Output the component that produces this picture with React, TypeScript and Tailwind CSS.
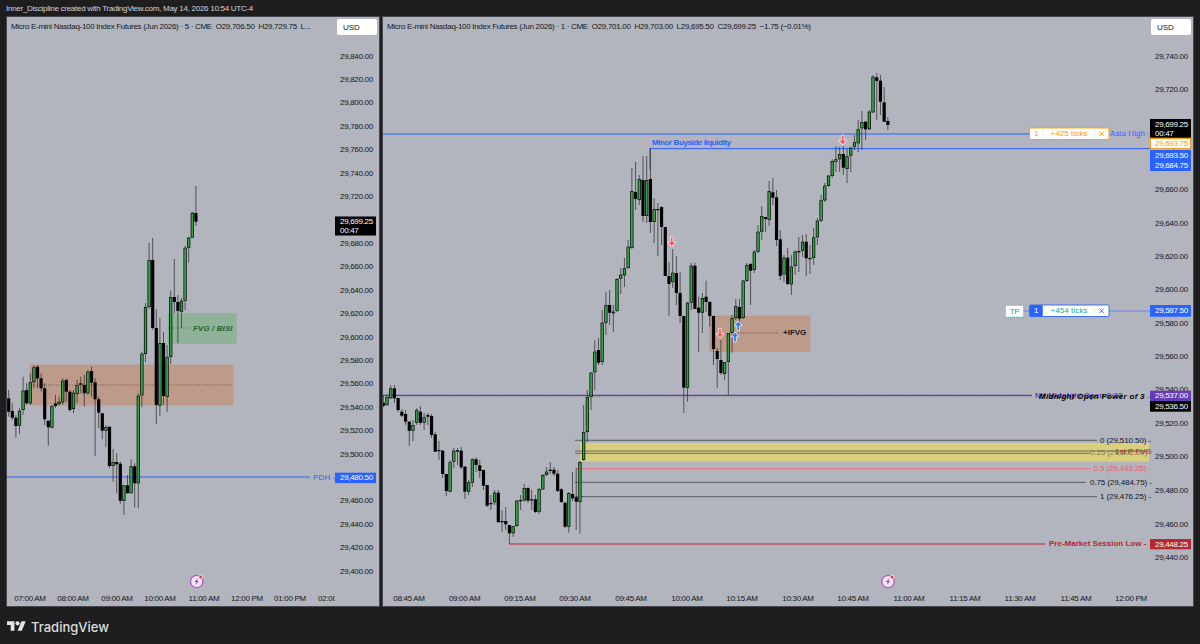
type Candle = [number, number, number, number, number];

// [body top, body bottom, wick top, wick bottom, green?] in page pixels
const leftCandles: Candle[] = [
  [398.3, 411.7, 390, 416.7, 0], [411, 417.7, 403.3, 420, 0], [417.7, 426, 415, 437.7, 0], [410.7, 425.7, 408.3, 434, 1],
  [390.7, 410, 376.7, 415, 1], [390, 403.3, 383.3, 405, 0], [382.3, 403.3, 373.3, 405, 1], [367.3, 382.3, 365, 388.3, 1],
  [366.7, 378.3, 365, 388.3, 0], [378.3, 388.3, 373.3, 391.7, 0], [388.3, 419.3, 383.3, 425, 0], [420.7, 427.3, 420.7, 445.7, 0],
  [406, 427.7, 405, 428.3, 1], [403.3, 406, 395, 408.3, 0], [401.7, 404, 396.7, 406, 1], [380.7, 402.3, 378.3, 405, 1],
  [380, 391.7, 378.3, 401.7, 0], [391.7, 410, 390, 411.7, 0], [392.7, 409, 390, 413.3, 1], [385, 394, 380, 403.3, 1],
  [383.3, 385, 376.7, 393.3, 1], [385, 393.3, 375, 406.7, 0], [371.7, 393.3, 370, 395, 1], [371, 382.7, 366.7, 396.7, 0],
  [382.3, 399.3, 378.3, 456, 0], [399.3, 412.7, 396.7, 428.3, 0], [413.3, 430.7, 413.3, 439.3, 0], [427, 430.7, 425, 446.7, 1],
  [426.7, 466, 426.7, 468.3, 0], [462, 466, 449, 481.7, 1], [462, 464.3, 453.3, 493.3, 0], [463.7, 500.7, 461.7, 504, 0],
  [485.3, 501, 485, 515, 1], [485.3, 493.3, 475, 493.3, 0], [466.3, 493.3, 459.3, 493.3, 1], [466.3, 483.3, 463.3, 507.3, 0],
  [395.7, 483.3, 393.3, 508.3, 1], [353.7, 395.3, 351.7, 407.3, 1], [307, 354, 303, 362, 1], [260, 307, 243, 309, 1],
  [260, 328, 238, 330, 0], [328, 405, 309, 424, 0], [343, 405.6, 318, 416, 1], [343, 396, 332, 405, 0],
  [357, 397, 345, 412, 1], [297, 357, 290.7, 364, 1], [297, 302, 259, 313, 0], [302, 311, 295, 343, 0],
  [300.7, 311.7, 298, 328, 1], [247.7, 300.7, 246, 310, 1], [237.7, 247.7, 237, 262.7, 1], [212.7, 237.7, 212, 238, 1],
  [213, 221.7, 186, 226, 0],
];

const rightCandles: Candle[] = [
  [402.7, 406, 395, 407, 0], [397, 405, 394, 406, 1], [388.3, 398.3, 385, 399, 1], [388.3, 398.3, 385, 403, 0],
  [398, 410, 398, 412, 0], [411.7, 415.7, 409, 417, 0], [414, 421.7, 410, 425, 0], [421.7, 430.7, 421, 446, 0],
  [425, 430.7, 420, 441, 1], [410, 422.7, 408, 425, 1], [411.7, 422.7, 406, 425, 0], [417.3, 422.7, 413, 430, 1],
  [415, 416.7, 413, 425, 0], [416, 435, 414, 438, 0], [434.3, 451.7, 432, 452, 0], [450, 451, 441, 460, 0],
  [450.7, 474, 450, 478, 0], [474, 491, 474, 496, 0], [462.3, 491.7, 460, 492, 1], [450.7, 461.7, 448, 468, 1],
  [450, 451.7, 448, 465, 1], [450.7, 467.3, 447, 469, 0], [466.7, 491.7, 466, 499, 0], [482.3, 491.7, 480, 495, 1],
  [459.3, 482.7, 458, 487, 1], [459.3, 465, 457, 472, 0], [465.3, 471, 460, 478, 0], [470, 485.7, 470, 490, 0],
  [485, 505.7, 485, 507, 0], [503, 504, 495, 510, 0], [492.7, 502.3, 490, 505, 1], [492.7, 522.3, 490, 522, 0],
  [521, 522, 510, 532, 0], [521, 524.3, 507, 530, 0], [525, 533.3, 525, 544, 0], [526, 533.3, 526, 537, 1],
  [500.7, 526, 500, 527, 1], [500, 501, 495, 510, 0], [488, 500.3, 484, 502, 1], [488, 500.7, 487, 503, 0],
  [499.3, 500, 490, 510, 0], [499.3, 512, 495, 513, 0], [489, 511.7, 488, 514, 1], [475, 489.3, 474, 490, 1],
  [471.7, 475, 467, 476, 1], [469.7, 471, 462, 474, 0], [469.7, 473.7, 467, 476, 0], [473.7, 491, 470, 492, 0],
  [489.3, 502, 488, 503, 0], [502.7, 526.7, 502, 528, 0], [493, 526.7, 492, 532.7, 1], [494, 498.3, 472, 501, 0],
  [497.3, 501.7, 468, 530, 0], [462, 502, 461, 533.7, 1], [432, 460, 405, 461, 1], [397, 432, 390, 442, 1],
  [372.7, 397, 372, 410, 1], [351.7, 372.3, 340, 390, 1], [350, 362.7, 338, 365, 0], [322.7, 362, 310, 365, 1],
  [305, 322.7, 292, 335, 1], [305, 312.7, 290, 325, 0], [311.7, 313.3, 305, 332, 1], [279, 311, 278, 312, 1],
  [274.7, 278.7, 268, 294, 1], [268.3, 275.3, 258, 287, 1], [246.7, 268, 240, 269, 1], [191, 248, 168, 249, 1],
  [192, 199, 162, 210, 0], [179, 200, 175, 205, 1], [180, 216, 156, 222, 0], [180, 216, 156, 223, 1],
  [179, 222, 148, 233, 0], [209, 222, 198, 243, 1], [209, 210, 203, 256, 0], [207, 227, 206, 245, 0],
  [227, 276, 227, 276, 0], [276, 284, 262, 316, 0], [272.7, 282, 249, 288, 1], [273, 293, 256, 305, 0],
  [293, 316, 272, 323, 0], [316, 387.7, 316, 413, 0], [302.7, 387.7, 302, 401.7, 1], [265.7, 302.7, 263, 310, 1],
  [265.7, 309, 262.7, 309, 0], [307.7, 312.7, 296.7, 351.7, 0], [298, 312.7, 293, 333, 1], [296.7, 302, 280.7, 311.7, 0],
  [302, 316, 301, 326.7, 0], [316, 349, 316, 365, 0], [351, 359, 348, 388, 0], [360, 373, 340, 375, 0],
  [362, 374, 362, 380, 1], [333, 362, 333, 395, 1], [318, 333, 315, 352.7, 1], [306, 318, 299, 320, 1],
  [307, 318.7, 299, 323, 0], [280.7, 318, 280, 319, 1], [265, 281, 263, 281.7, 1], [264, 270.7, 263, 305, 0],
  [251.7, 270, 250, 273, 1], [231.7, 251.7, 225, 253, 1], [216, 231.7, 206, 240, 1], [217, 219, 217, 232, 0],
  [191, 220, 181, 226, 1], [192.3, 197.7, 178, 205, 0], [197.3, 240, 190, 246, 0], [239.3, 276, 230, 280, 0],
  [257.7, 274.3, 255, 282, 1], [257.7, 284, 248, 285, 0], [266.7, 284.3, 255, 295, 1], [251.7, 266, 250, 275, 1],
  [251, 252.3, 237, 272, 0], [241.7, 250.7, 235, 257, 1], [241.7, 258.3, 234, 276, 0], [258, 259, 245, 274, 0],
  [237.3, 258, 228, 265, 1], [220.7, 237.3, 218, 245, 1], [200.3, 220.7, 195, 222, 1], [185.7, 200.3, 183, 202, 1],
  [175.7, 186, 175, 187, 1], [161, 176, 159, 178, 1], [159.3, 161.7, 146, 172, 1], [154, 159.3, 147, 172, 1],
  [154, 167.7, 146, 175, 0], [156.3, 169, 148, 183, 1], [147.7, 155.7, 147, 172, 1], [142.3, 146.7, 135, 150, 1],
  [129.3, 143.3, 120, 152, 1], [122, 128.3, 111, 150, 1], [121.7, 129.3, 121, 140, 0], [111.7, 129.3, 110, 130, 1],
  [76.7, 112.3, 75, 113, 1], [77.3, 81, 73, 120, 0], [80.7, 101.7, 75, 115, 0], [102.3, 121.7, 87, 122, 0],
  [121, 125, 117, 130, 0],
];

const leftPrices = ["29,840.00", "29,820.00", "29,800.00", "29,780.00", "29,760.00", "29,740.00", "29,720.00", "29,700.00", "29,680.00", "29,660.00", "29,640.00", "29,620.00", "29,600.00", "29,580.00", "29,560.00", "29,540.00", "29,520.00", "29,500.00", "", "29,460.00", "29,440.00", "29,420.00", "29,400.00"];

const rightPrices: [string, number][] = [
  ["29,740.00", 56], ["29,720.00", 89], ["29,660.00", 189], ["29,640.00", 223], ["29,620.00", 256], ["29,600.00", 289],
  ["29,580.00", 323], ["29,560.00", 356], ["29,540.00", 389], ["29,520.00", 423], ["29,500.00", 456], ["29,480.00", 490],
  ["29,460.00", 524], ["29,440.00", 557],
];

const leftTimes: [string, number][] = [["07:00 AM", 30], ["08:00 AM", 73], ["09:00 AM", 117], ["10:00 AM", 160], ["11:00 AM", 204], ["12:00 PM", 247], ["01:00 PM", 290], ["02:00 PM", 334]];

const rightTimes: [string, number][] = [
  ["08:45 AM", 409], ["09:00 AM", 464.6], ["09:15 AM", 520], ["09:30 AM", 575], ["09:45 AM", 631], ["10:00 AM", 687], ["10:15 AM", 742],
  ["10:30 AM", 798], ["10:45 AM", 853], ["11:00 AM", 909], ["11:15 AM", 965], ["11:30 AM", 1020], ["11:45 AM", 1076], ["12:00 PM", 1131],
];

function Candles({ data, x0, step }: { data: Candle[]; x0: number; step: number }) {
  return (
    <g>
      {data.map(([top, bot, wt, wb, up], i) => {
        const x = x0 + step * i;
        return (
          <g key={i}>
            <line x1={x} x2={x} y1={wt} y2={wb} stroke="#2a2a2a" strokeWidth="1" opacity="0.7" />
            <rect x={x - 1.6} y={top} width="3.2" height={Math.max(bot - top, 1.2)} fill="#000000" />
            {up === 1 && bot - top > 1.5 && <rect x={x - 0.9} y={top + 0.6} width="1.8" height={bot - top - 1.2} fill="#2fa644" />}
          </g>
        );
      })}
    </g>
  );
}

function Label({ x, y, children, fill = "#131722", anchor = "start", className = "tracking-[-0.3px]" }: { x: number; y: number; children: string; fill?: string; anchor?: "start" | "middle" | "end"; className?: string }) {
  return (
    <text x={x} y={y} fill={fill} textAnchor={anchor} dominantBaseline="central" className={"text-[8px] " + className}>
      {children}
    </text>
  );
}

function Tag({ x, y, w = 41, h = 10.4, bg, text, fill = "#ffffff" }: { x: number; y: number; w?: number; h?: number; bg: string; text: string; fill?: string }) {
  return (
    <g>
      <rect x={x} y={y} width={w} height={h} fill={bg} />
      <Label x={x + 5} y={y + h / 2} fill={fill}>{text}</Label>
    </g>
  );
}

function Bolt({ cx, cy }: { cx: number; cy: number }) {
  return (
    <g transform={`translate(${cx} ${cy})`}>
      <circle r="6.2" fill="#f3e5f5" stroke="#b455c9" strokeWidth="1.3" />
      <path d="M1.6 -3.4 L-2 0.6 L-0.2 0.6 L-1.6 3.4 L2 -0.6 L0.2 -0.6 Z" fill="#9c27b0" />
      <circle cx="4" cy="-4.4" r="1.9" fill="#f23645" stroke="#ffffff" strokeWidth="0.7" />
    </g>
  );
}

function Arrow({ x, y, up }: { x: number; y: number; up?: boolean }) {
  const d = "M-0.9 -4.5 H0.9 V0.4 H3.4 L0 4.5 L-3.4 0.4 H-0.9 Z";
  const color = up ? "#2979ff" : "#f7525f";
  return (
    <g transform={`translate(${x} ${y})${up ? " rotate(180)" : ""}`}>
      <path d={d} fill={color} stroke="#ffffff" strokeWidth="1.4" strokeLinejoin="round" paintOrder="stroke" opacity="0.95" />
    </g>
  );
}

function PositionTool({ y, color, text, filled }: { y: number; color: string; text: string; filled?: boolean }) {
  return (
    <g>
      <rect x="1029.5" y={y} width="79.5" height="11.5" rx="1.5" fill="#ffffff" stroke={filled ? "#2962ff" : color} strokeWidth="0.9" />
      {filled && <path d={`M1031 ${y} H1043 V${y + 11.5} H1031 a1.5 1.5 0 0 1 -1.5 -1.5 V${y + 1.5} a1.5 1.5 0 0 1 1.5 -1.5 Z`} fill="#2962ff" />}
      <line x1="1043" x2="1043" y1={y} y2={y + 11.5} stroke="#e6e6e6" strokeWidth="0.6" />
      <line x1="1094.5" x2="1094.5" y1={y} y2={y + 11.5} stroke="#e6e6e6" strokeWidth="0.6" />
      <Label x={1036} y={y + 5.9} fill={filled ? "#ffffff" : color} anchor="middle">1</Label>
      <Label x={1069} y={y + 5.9} fill={color} anchor="middle" className="tracking-[0.1px]">{text}</Label>
      <path d={`M1099.5 ${y + 3.5} l4.2 4.5 M1103.7 ${y + 3.5} l-4.2 4.5`} stroke={filled ? "#2962ff" : color} strokeWidth="0.9" />
    </g>
  );
}

function LeftChart() {
  return (
    <svg width="372" height="589" viewBox="7 17 372 589" className="block">
      <defs>
        <clipPath id="time-clip">
          <rect x="7" y="590" width="328" height="16" />
        </clipPath>
      </defs>
      <rect x="30" y="365" width="203" height="40" fill="#bd9a89" stroke="#c09580" strokeWidth="0.5" />
      <line x1="30" x2="232" y1="385" y2="385" stroke="#4a3a32" strokeWidth="0.7" strokeDasharray="1 1.6" />
      <rect x="167.7" y="313.3" width="69" height="30.7" fill="#8fb298" />
      <line x1="168" x2="191" y1="328" y2="328" stroke="#2c5a36" strokeWidth="0.7" strokeDasharray="1 1.6" />
      <line x1="7" x2="310" y1="477" y2="477" stroke="#2962ff" strokeWidth="1" />
      <Candles data={leftCandles} x0={8.7} step={3.6} />
      <Label x={193} y={328} fill="#27602f" className="font-bold italic tracking-[0.1px]">FVG / BISI</Label>
      <Label x={313} y={477} fill="#2962ff" className="tracking-[0.2px]">PDH</Label>
      <Label x={332.5} y={477} fill="#2962ff">-</Label>
      {leftPrices.map((p, i) => p && <Label key={p} x={340} y={56 + i * 23.42}>{p}</Label>)}
      <Tag x={335} y={472.7} bg="#2962ff" text="29,480.50" />
      <rect x="335" y="216.5" width="41" height="19" fill="#000000" />
      <Label x={340} y={221.5} fill="#ffffff">29,699.25</Label>
      <Label x={340} y={230.5} fill="#ffffff">00:47</Label>
      <Bolt cx={196.7} cy={581.5} />
      <g clipPath="url(#time-clip)">
        {leftTimes.map(([t, x]) => <Label key={t} x={x} y={598} anchor="middle">{t}</Label>)}
      </g>
    </svg>
  );
}

function RightChart() {
  return (
    <svg width="810" height="589" viewBox="383 17 810 589" className="block">
      <rect x="709.3" y="316" width="100.7" height="35.7" fill="#bd9a89" stroke="#c09580" strokeWidth="0.5" />
      <line x1="735" x2="779" y1="333" y2="333" stroke="#3a2e28" strokeWidth="0.7" strokeDasharray="1 1.6" />
      <rect x="580" y="443" width="569" height="18.5" fill="#d9cf7c" />

      <line x1="383" x2="1029" y1="134" y2="134" stroke="#2962ff" strokeWidth="1.1" />
      <line x1="650" x2="1150" y1="148.6" y2="148.6" stroke="#2962ff" strokeWidth="1" />
      <line x1="650" x2="650" y1="148.6" y2="170" stroke="#2a2a2a" strokeWidth="1" opacity="0.7" />
      <line x1="1109" x2="1150" y1="311" y2="311" stroke="#2962ff" strokeWidth="0.8" opacity="0.7" />
      <line x1="1023" x2="1029" y1="311" y2="311" stroke="#2962ff" strokeWidth="0.8" opacity="0.7" />
      <line x1="383" x2="1032" y1="395.4" y2="395.4" stroke="#673ab7" strokeWidth="1.1" />
      <line x1="383" x2="1032" y1="396.9" y2="396.9" stroke="#2a2a2a" strokeWidth="0.6" strokeDasharray="1 1.4" opacity="0.6" />

      <line x1="575" x2="1097" y1="440.3" y2="440.3" stroke="#50535e" strokeWidth="0.9" />
      <line x1="575" x2="1150" y1="451" y2="451" stroke="#50535e" strokeWidth="0.8" />
      <line x1="575" x2="1090" y1="453.3" y2="453.3" stroke="#50535e" strokeWidth="0.8" />
      <line x1="575" x2="1091" y1="468.5" y2="468.5" stroke="#e8737f" strokeWidth="0.9" />
      <line x1="575" x2="1086" y1="482.3" y2="482.3" stroke="#6a6d78" strokeWidth="1.2" />
      <line x1="575" x2="1097" y1="496.7" y2="496.7" stroke="#50535e" strokeWidth="0.9" />
      <line x1="509" x2="1045" y1="544" y2="544" stroke="#b22833" strokeWidth="1" />

      <Candles data={rightCandles} x0={383.3} step={3.71} />

      <Label x={652} y={142.3} fill="#2962ff" className="font-bold tracking-[-0.4px]">Minor Buyside liquidity</Label>
      <Label x={783} y={332.5} fill="#131722" className="font-bold">+IFVG</Label>

      <Arrow x={671.7} y={241.7} />
      <Arrow x={842.7} y={140} />
      <Arrow x={720} y={333.3} />
      <Arrow x={738.3} y={326} up />
      <Arrow x={735} y={337} up />

      {rightPrices.map(([p, y]) => <Label key={p} x={1155} y={y}>{p}</Label>)}

      <Label x={1110} y={133.5} fill="#2962ff" className="tracking-[0.1px]">Asia High</Label>
      <line x1="1109" x2="1150" y1="133.5" y2="133.5" stroke="#ff9800" strokeWidth="0.8" />
      <PositionTool y={128} color="#ff9800" text="+425 ticks" />

      <rect x="1005.5" y="305.5" width="18" height="11.5" fill="#ffffff" stroke="#26a69a" strokeWidth="0.6" strokeDasharray="1 1" />
      <Label x={1014.5} y={311.3} fill="#26a69a" anchor="middle">TP</Label>
      <PositionTool y={305} color="#26a69a" text="+454 ticks" filled />

      <Label x={1035} y={395} fill="#673ab7" className="font-bold tracking-[0px]">NY Midnight Open 2:23</Label>
      <Label x={1039} y={396} fill="#000000" className="font-bold italic tracking-[0.3px]">Midnight Open Power of 3</Label>
      <Label x={1147} y={396} fill="#673ab7">-</Label>

      <Label x={1100} y={440} fill="#131722" className="tracking-[-0.1px]">0 (29,510.50) -</Label>
      <Label x={1090} y={452} fill="#7d7a50" className="tracking-[-0.1px]">0.25 (29,502.00)</Label>
      <Label x={1115} y={451} fill="#b22833" className="tracking-[0px]">1st P FVG</Label>
      <Label x={1093.5} y={468.5} fill="#e85c6a" className="tracking-[-0.1px]">0.5 (29,493.25) -</Label>
      <Label x={1090} y={482.3} fill="#131722" className="tracking-[-0.1px]">0.75 (29,484.75) -</Label>
      <Label x={1100} y={496.7} fill="#131722" className="tracking-[-0.1px]">1 (29,476.25) -</Label>
      <Label x={1049} y={543.5} fill="#b22833" className="font-bold tracking-[0px]">Pre-Market Session Low -</Label>

      <rect x="1150" y="119" width="41" height="18.7" fill="#000000" />
      <Label x={1155} y={124} fill="#ffffff">29,699.25</Label>
      <Label x={1155} y={133} fill="#ffffff">00:47</Label>
      <rect x="1150.5" y="138.5" width="40" height="9.8" fill="#ffffff" stroke="#ff9800" strokeWidth="0.9" />
      <Label x={1155} y={143.5} fill="#ff9800">29,693.75</Label>
      <rect x="1150" y="150" width="41" height="21" fill="#2962ff" />
      <Label x={1155} y={155} fill="#ffffff">29,693.50</Label>
      <Label x={1155} y={165.5} fill="#ffffff">29,684.75</Label>
      <Tag x={1150} y={305} h={11.7} bg="#2962ff" text="29,587.50" />
      <Tag x={1150} y={390.7} bg="#673ab7" text="29,537.00" />
      <Tag x={1150} y={401} h={10.7} bg="#000000" text="29,536.50" />
      <Tag x={1150} y={539} h={10.3} bg="#b22833" text="29,448.25" />

      <Bolt cx={888} cy={581.5} />
      {rightTimes.map(([t, x]) => <Label key={t} x={x} y={598} anchor="middle">{t}</Label>)}
    </svg>
  );
}

function Panel({ width, legend, children }: { width: string; legend: string; children: React.ReactNode }) {
  return (
    <div className={`relative border border-[#45484e] bg-[#b2b5be] ${width}`}>
      {children}
      <div className="absolute left-[4px] top-[5px] whitespace-pre text-[8px] leading-[10px] tracking-[-0.3px] text-[#131722]">{legend}</div>
      <div className="absolute right-[2px] top-[2px] h-[16px] w-[40px] rounded-[2px] bg-white pl-[6px] text-[8px] leading-[17px] text-[#131722]">USD</div>
    </div>
  );
}

export default function App() {
  return (
    <div className="flex h-[644px] w-[1200px] flex-col overflow-hidden bg-[#1e1e1e] pl-[6px] [font-family:'Liberation_Sans',Arial,sans-serif]">
      <div className="h-[16px] text-[8px] leading-[18px] tracking-[-0.27px] text-[#d1d4dc]">Inner_Discipline created with TradingView.com, May 14, 2026 10:54 UTC-4</div>
      <div className="flex gap-[2px]">
        <Panel width="w-[374px]" legend="Micro E-mini Nasdaq-100 Index Futures (Jun 2026) · 5 · CME  O29,706.50  H29,729.75  L...">
          <LeftChart />
        </Panel>
        <Panel width="w-[812px]" legend="Micro E-mini Nasdaq-100 Index Futures (Jun 2026) · 1 · CME  O29,701.00  H29,703.00  L29,695.50  C29,699.25  −1.75 (−0.01%)">
          <RightChart />
        </Panel>
      </div>
      <div className="flex items-center gap-[5px] pl-[1px] pt-[12px]">
        <svg width="19" height="15" viewBox="0 0 36 28" fill="#e4e4e4">
          <path d="M14 22H7V11H0V4h14v18zM28 22h-8l7.5-18h8L28 22z" />
          <circle cx="20" cy="8" r="4" />
        </svg>
        <span className="text-[13px] font-medium leading-[14px] text-[#dcdcdc] [font-family:Inter,sans-serif]">TradingView</span>
      </div>
    </div>
  );
}
